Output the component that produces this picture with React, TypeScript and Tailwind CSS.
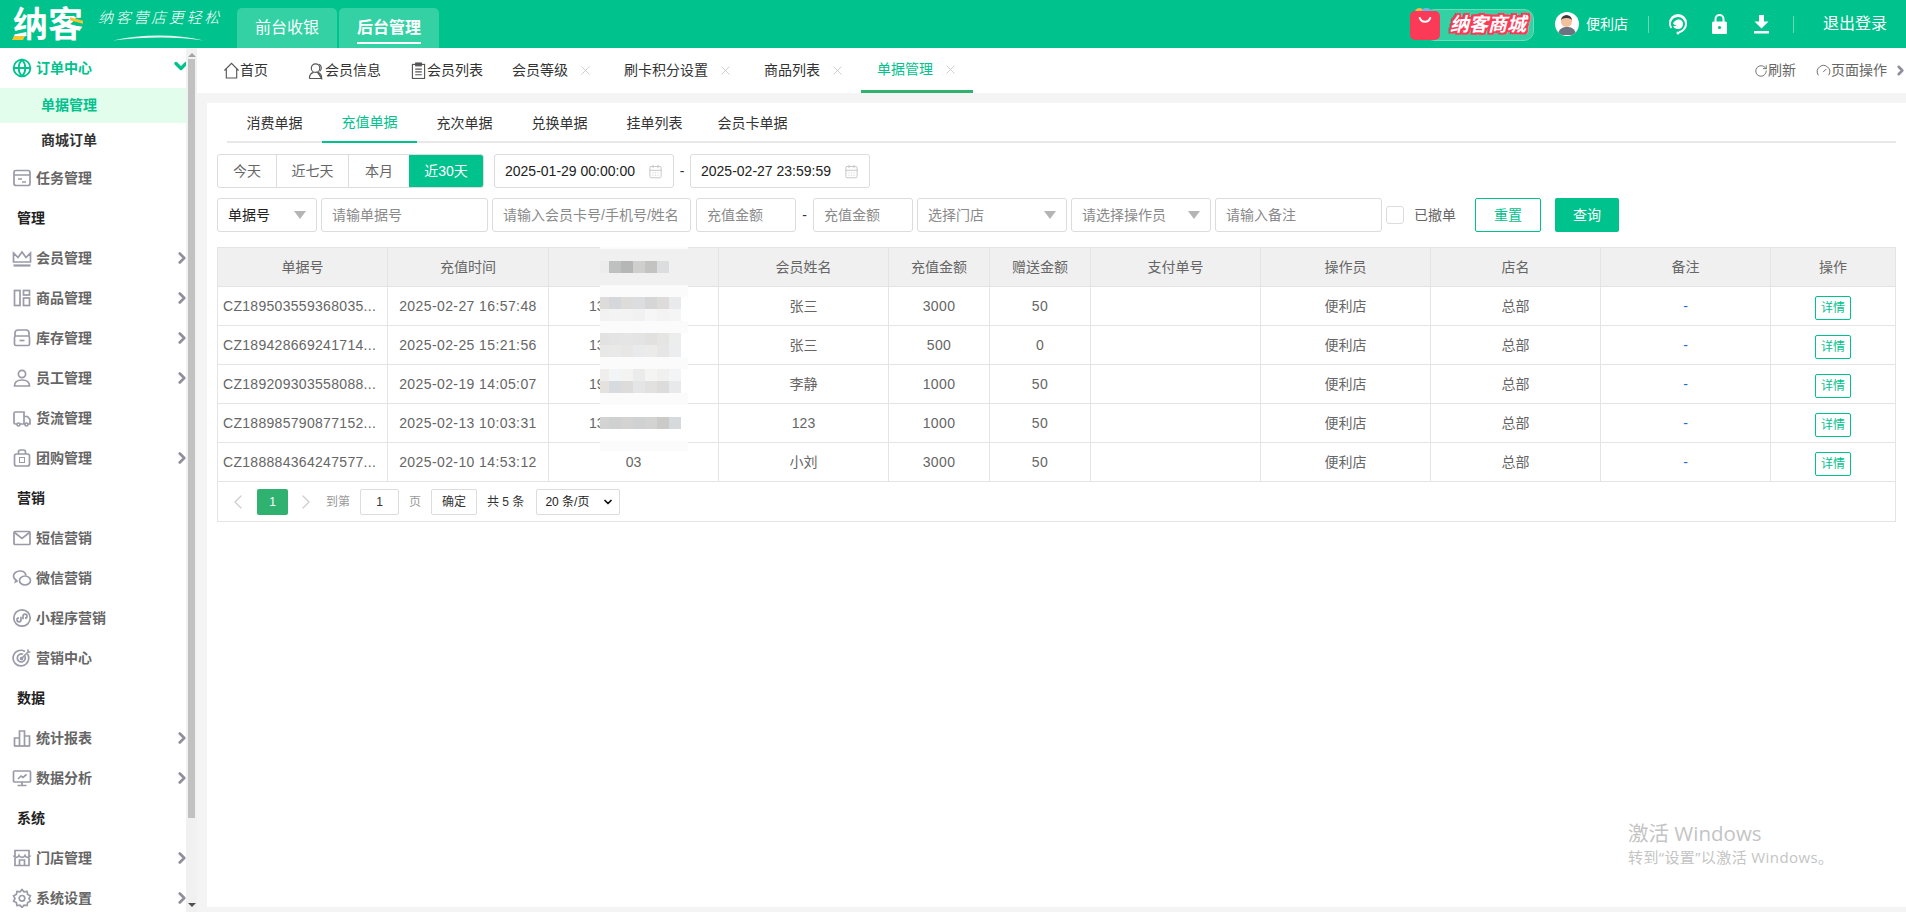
import React from 'react';
import { ChevronDown, ChevronRight, ChevronLeft, Globe, RotateCw, Gauge, X, CalendarDays } from 'lucide-react';

const font = "font-['Liberation_Sans','Noto_Sans_CJK_SC',sans-serif]";

// 侧边栏图标，手画的，线条跟原图差不多粗
const icons: Record<string, React.ReactNode> = {
  task: <><rect x="2" y="2.5" width="16" height="15" rx="2" /><path d="M2 7h16M6 11h4M10 14h4" /></>,
  crown: <><path d="M1.5 5v9h17V5l-4.5 4.5L10 4 6 9.5z" /><path d="M1.5 17.5h17" strokeWidth="2.2" /></>,
  goods: <><rect x="2.5" y="2.5" width="5.5" height="15" /><rect x="11.5" y="2.5" width="6" height="4.5" /><rect x="11.5" y="10" width="6" height="7.5" /></>,
  stock: <><path d="M3 8V5a3 3 0 0 1 3-3h8a3 3 0 0 1 3 3v3" /><rect x="2.5" y="8" width="15" height="9.5" rx="1.5" /><path d="M7.5 12.5h5" /></>,
  person: <><circle cx="10" cy="6" r="3.6" /><path d="M2.5 18c0-4 3-6 7.5-6s7.5 2 7.5 6z" /></>,
  truck: <><path d="M5 16H3.5A1.5 1.5 0 0 1 2 14.500V5.500A1.500 1.500 0 0 1 3.500 4H12v12H8" /><path d="M12 8.500h3.500l2.500 3V16h-2M12 16h1" /><circle cx="6.500" cy="16.500" r="1.500" /><circle cx="14.500" cy="16.500" r="1.500" /></>,
  bag: <><rect x="2.500" y="6" width="15" height="12" rx="2" /><path d="M6.500 6V4a2 2 0 0 1 2-2h3a2 2 0 0 1 2 2v2" /><rect x="7.500" y="9.500" width="5" height="5" strokeWidth="1" /></>,
  mail: <><rect x="2" y="3.500" width="16" height="13" rx="1" /><path d="M2.500 4.500l7.500 6 7.500-6" /></>,
  wechat: <><path d="M14 7.500C13.500 4.500 11 3 8 3 4.500 3 1.500 5.200 1.500 8c0 1.600 1 3 2.500 4l-.5 1.800 2.200-1.100" /><ellipse cx="13" cy="12.500" rx="5.500" ry="4.500" /><path d="M11 11.500h.1M15 11.500h.1M5.500 7h.1M10 7h.1" strokeWidth="1.800" /></>,
  mini: <><circle cx="10" cy="10" r="8.200" /><path d="M9 8.800v3a2 2 0 1 1-2-2M11 11.200v-3a2 2 0 1 1 2 2" /></>,
  target: <><path d="M15.500 6a7.800 7.800 0 1 1-2.500-2.500" /><path d="M12.800 8a4 4 0 1 1-1.800-1.700" /><circle cx="9.500" cy="10.500" r="1" /><path d="M9.500 10.500L16 4M16 1.500V4h2.500" /></>,
  stats: <><path d="M2.500 18v-8h5M7.500 18V3h5v15M12.500 8h5v10" /><path d="M2 18h16" /></>,
  monitor: <><rect x="1.500" y="3" width="17" height="11" rx="1" /><path d="M6 11l3-3 2 1.500 3.500-3M10 14v3.500M5.500 17.500h9" /></>,
  store: <><path d="M3 9V2.500h14V9" /><path d="M3 9V17.500h14V9M1.500 7.500c1 2.500 4.500 2.500 5.500 0 1 2.500 5 2.500 6 0 1 2.500 4.500 2.500 5.500 0M7.500 17.500v-5.500h5v5.500" /></>,
  gear: <><path d="M10 1.600l2 2.200 3-.3.700 2.900 2.700 1.400L17 10.500l1.400 2.700-2.700 1.400-.7 2.900-3-.3-2 2.200-2-2.200-3 .3-.7-2.900-2.700-1.400L3 10.500 1.600 7.800l2.700-1.400.7-2.900 3 .3z" /><circle cx="10" cy="10.300" r="2.800" /></>,
};

const NavIcon = ({ name }: { name: string }) => (
  <svg viewBox="0 0 20 20" className="w-[20px] h-[20px] mr-[4px] shrink-0 text-[#9a9aa8]" fill="none" stroke="currentColor" strokeWidth="1.700">
    {icons[name]}
  </svg>
);

const menu: { label: string; icon?: string; arrow?: boolean }[] = [
  { label: '任务管理', icon: 'task' },
  { label: '管理' },
  { label: '会员管理', icon: 'crown', arrow: true },
  { label: '商品管理', icon: 'goods', arrow: true },
  { label: '库存管理', icon: 'stock', arrow: true },
  { label: '员工管理', icon: 'person', arrow: true },
  { label: '货流管理', icon: 'truck' },
  { label: '团购管理', icon: 'bag', arrow: true },
  { label: '营销' },
  { label: '短信营销', icon: 'mail' },
  { label: '微信营销', icon: 'wechat' },
  { label: '小程序营销', icon: 'mini' },
  { label: '营销中心', icon: 'target' },
  { label: '数据' },
  { label: '统计报表', icon: 'stats', arrow: true },
  { label: '数据分析', icon: 'monitor', arrow: true },
  { label: '系统' },
  { label: '门店管理', icon: 'store', arrow: true },
  { label: '系统设置', icon: 'gear', arrow: true },
];

const tabs = [
  { label: '会员等级', w: 'w-[112px]' },
  { label: '刷卡积分设置', w: 'w-[140px]' },
  { label: '商品列表', w: 'w-[113px]' },
];

const subTabs = ['消费单据', '充值单据', '充次单据', '兑换单据', '挂单列表', '会员卡单据'];

const rows = [
  ['CZ189503559368035...', '2025-02-27 16:57:48', '13', '张三', '3000', '50'],
  ['CZ189428669241714...', '2025-02-25 15:21:56', '13', '张三', '500', '0'],
  ['CZ189209303558088...', '2025-02-19 14:05:07', '19', '李静', '1000', '50'],
  ['CZ188985790877152...', '2025-02-13 10:03:31', '13', '123', '1000', '50'],
  ['CZ188884364247577...', '2025-02-10 14:53:12', '03', '小刘', '3000', '50'],
];

const columns = ['w-[170px]', 'w-[161px]', 'w-[170px]', 'w-[170px]', 'w-[101px]', 'w-[101px]', 'w-[170px]', 'w-[170px]', 'w-[170px]', 'w-[170px]', 'flex-1'];
const headers = ['单据号', '充值时间', '', '会员姓名', '充值金额', '赠送金额', '支付单号', '操作员', '店名', '备注', '操作'];

// 手机号打码，马赛克色块: [y, 每格颜色...]
const mosaic: [number, string[]][] = [
  [14, ['#ececec', '#bfc0c0', '#b5b7b6', '#cfcfcd', '#c3c3c2', '#dcdddf']],
  [50, ['#dedcda', '#d5d7db', '#dddcda', '#dcdde0', '#d6d6d6', '#dddcda', '#e9eaec']],
  [62, ['#f2f2f2', '#f3f3f3', '#f3f3f3', '#f1f1f1', '#f6f6f6', '#f3f3f3', '#f5f5f5']],
  [86, ['#e2e2e2', '#e3e4e3', '#e5e5e5', '#e4e4e4', '#e3e1e0', '#e5e5e4', '#eceded']],
  [98, ['#e8e8e7', '#e8e9e8', '#e8e7e5', '#e9eaec', '#ebebea', '#e6e6e6', '#ecedee']],
  [122, ['#f0eeed', '#f3f4f6', '#f3f3f1', '#ebebeb', '#f4f4f2', '#f0f0ee', '#f3f4f6']],
  [134, ['#e4e1df', '#d7dade', '#dddcda', '#e4e5e7', '#e2e1df', '#dcdcdc', '#e8e9eb']],
  [170, ['#d3d3d3', '#cfd1d1', '#d4d3d1', '#cfd1d3', '#d3d3d1', '#cbcac8', '#d7dadd']],
];
const cellX = [0, 9, 21, 33, 45, 57, 69];
const cellW = [9, 12, 12, 12, 12, 12, 12];
const bands = [38, 74, 110, 146, 194];

const Caret = () => (
  <span className="w-0 h-0 border-l-[6px] border-r-[6px] border-t-[8px] border-l-transparent border-r-transparent border-t-[#b4b4b4]" />
);

const Field = ({ text, w, caret }: { text: string; w: string; caret?: boolean }) => (
  <div className={`${w} h-[34px] shrink-0 flex items-center justify-between pl-[10px] pr-[10px] border border-[#dcdcdc] rounded-[3px] text-[14px] text-[#8a8a8a]`}>
    <span className="truncate">{text}</span>
    {caret && <Caret />}
  </div>
);

const App: React.FC = () => {
  return (
    <div className={`${font} w-[1906px] h-[912px] overflow-hidden flex flex-col bg-white`}>
      {/* header */}
      <header className="h-[48px] shrink-0 bg-[#00c28c] flex items-stretch text-white">
        <div className="w-[237px] shrink-0 flex items-center pl-[13px]">
          <div className="relative w-[70px] h-[36px] flex items-center">
            <span className="text-[35px] font-bold leading-none whitespace-nowrap">纳客</span>
            <span className="absolute left-0 bottom-[2px] w-[11px] h-[4px] bg-[#f7c52d] -skew-x-[25deg]" />
            <span className="absolute right-0 top-[13px] w-[13px] h-[3px] bg-[#f7c52d] skew-y-[15deg]" />
          </div>
          <div className="ml-[15px] relative h-[40px] w-[126px] flex items-center">
            <span className="text-[15px] italic font-light tracking-[2.7px] whitespace-nowrap -mt-[11px]">纳客营店更轻松</span>
            <svg viewBox="0 0 125 12" className="absolute left-[2px] bottom-[2px] w-[118px] h-[9px]">
              <path d="M1 10C40 1 85 1 122 10C85 4 40 5 1 10Z" fill="#e6fbf3" />
            </svg>
          </div>
        </div>
        <div className="flex items-end gap-[2px]">
          <div className="w-[100px] h-[40px] rounded-t-[5px] bg-[#33d1a4] flex items-center justify-center text-[16px]">前台收银</div>
          <div className="w-[100px] h-[40px] rounded-t-[5px] bg-[#33d1a4] flex items-center justify-center text-[16px]">
            <span className="border-b-2 border-white pb-[2px] mt-[3px] font-bold">后台管理</span>
          </div>
        </div>
        <div className="ml-auto flex items-center pr-[19px]">
          {/* 商城入口 */}
          <div className="relative w-[124px] h-[32px] mt-[1px] mr-[21px] flex items-center justify-end pr-[8px]">
            <div className="absolute left-[15px] top-0 right-0 bottom-0 rounded-[10px] bg-[#33d1a4] border border-[#66ddbb]" />
            <span className="absolute left-[5px] -top-[1px] w-[9px] h-[9px] rounded-full bg-[#f0b84a]" />
            <span className="absolute left-[11px] -top-[1px] w-[11px] h-[10px] rounded-full bg-[#6cb8e6]" />
            <div className="absolute left-0 top-[2px] w-[30px] h-[29px] rounded-[5px] bg-[#fb3a57] flex items-start justify-center pt-[6px]">
              <svg viewBox="0 0 16 8" className="w-[14px] h-[7px]"><path d="M2 1C4 7 12 7 14 1" fill="none" stroke="#fff" strokeWidth="2.200" strokeLinecap="round" /></svg>
            </div>
            <span className="relative text-[19px] font-bold italic leading-[20px] [text-shadow:-2px_0_#fb3a57,2px_0_#fb3a57,0_-2px_#fb3a57,0_2px_#fb3a57,-2px_-2px_#fb3a57,2px_2px_#fb3a57,2px_-2px_#fb3a57,-2px_2px_#fb3a57]">纳客商城</span>
          </div>
          <div className="w-[24px] h-[24px] rounded-full bg-white overflow-hidden flex flex-col items-center mr-[7px]">
            <div className="w-[11px] h-[12px] mt-[3px] rounded-full bg-[#f2c09c] border-t-[3px] border-[#3a3a3a]" />
            <div className="w-[18px] h-[8px] rounded-t-full bg-[#6b7280]" />
          </div>
          <span className="text-[14px]">便利店</span>
          <div className="w-px h-[17px] bg-[#66d9b9] ml-[20px] mr-[19px]" />
          <svg viewBox="0 0 20 22" className="w-[20px] h-[22px]">
            <path d="M10 1a9 9 0 0 0-9 9.500c0 2 .7 3.700 1.800 5l1.200-1A7.200 7.200 0 0 1 2.900 10 7.100 7.100 0 0 1 17 10.500c0 3.700-2.600 7-6 7.500v2c4.600-.5 8-4.700 8-9.500A9 9 0 0 0 10 1z" fill="#fff" />
            <path d="M5 10.500C6 8 9 6 11.500 6.500c2 .5 3.500 2 3.500 4.500 0 3-2.200 5-5 5-2.500 0-4.500-1-5-3 1.500.5 3 0 4-1-1.500.5-3 0-4-1.500z" fill="#fff" />
            <circle cx="10" cy="20" r="1.500" fill="#fff" />
          </svg>
          <svg viewBox="0 0 15 20" className="w-[15px] h-[20px] ml-[24px]">
            <path d="M3.500 8V5a4 4 0 0 1 8 0v3" fill="none" stroke="#fff" strokeWidth="2" />
            <rect x="0" y="7.500" width="15" height="12.500" rx="1.500" fill="#fff" />
            <circle cx="7.500" cy="13.500" r="1.600" fill="#00c28c" />
          </svg>
          <svg viewBox="0 0 15 19" className="w-[15px] h-[19px] ml-[27px]">
            <path d="M5 0h5v6.500h4.500L7.500 13.500.5 6.500H5z" fill="#fff" />
            <rect x="0" y="16" width="15" height="2.500" fill="#fff" />
          </svg>
          <div className="w-px h-[17px] bg-[#66d9b9] ml-[24px] mr-[29px]" />
          <span className="text-[16px]">退出登录</span>
        </div>
      </header>

      <div className="flex flex-1 min-h-0">
        {/* sidebar */}
        <aside className="w-[197px] shrink-0 flex bg-white">
          <div className="w-[186px] shrink-0 overflow-hidden">
            <div className="h-[40px] flex items-center pl-[12px] text-[#00c28c] text-[14px] font-bold">
              <Globe className="w-[20px] h-[20px] mr-[4px]" strokeWidth={2.200} />
              <span className="flex-1">订单中心</span>
              <ChevronDown className="w-[20px] h-[20px] -mr-[5px] -mt-[4px]" strokeWidth={4} />
            </div>
            <div className="h-[35px] bg-[#e3fdec] flex items-center pl-[41px] text-[14px] font-bold text-[#00c28c]">单据管理</div>
            <div className="h-[35px] flex items-center pl-[41px] text-[14px] font-bold text-[#333]">商城订单</div>
            {menu.map(item => (
              <div key={item.label} className="h-[40px] flex items-center pl-[12px] text-[14px] font-bold">
                {item.icon ? (
                  <>
                    <NavIcon name={item.icon} />
                    <span className="flex-1 text-[#666]">{item.label}</span>
                    {item.arrow && <ChevronRight className="w-[18px] h-[18px] -mr-[5px] text-[#8f8f9c]" strokeWidth={3.500} />}
                  </>
                ) : (
                  <span className="pl-[5px] text-[#222]">{item.label}</span>
                )}
              </div>
            ))}
          </div>
          {/* scrollbar */}
          <div className="w-[11px] shrink-0 flex flex-col items-center bg-[#f1f1f1]">
            <span className="mt-[5px] w-0 h-0 border-l-[4px] border-r-[4px] border-b-[4px] border-l-transparent border-r-transparent border-b-[#a3a3a3]" />
            <div className="w-[7px] h-[759px] mt-[2px] bg-[#c1c1c1]" />
            <span className="mt-auto mb-[5px] w-0 h-0 border-l-[4px] border-r-[4px] border-t-[4px] border-l-transparent border-r-transparent border-t-[#505050]" />
          </div>
        </aside>

        <main className="flex-1 min-w-0 flex flex-col bg-[#f4f4f4]">
          {/* page tabs */}
          <div className="h-[45px] shrink-0 bg-white flex items-stretch text-[14px] text-[#333]">
            <div className="w-[111px] flex items-center pl-[26px]">
              <svg viewBox="0 0 18 18" className="w-[17px] h-[17px] text-[#555]" fill="none" stroke="currentColor" strokeWidth="1.200">
                <path d="M1.500 9L9 1.500 16.500 9M3.500 7.500V17h11V7.500" />
              </svg>首页
            </div>
            <div className="w-[103px] flex items-center">
              <svg viewBox="0 0 18 18" className="w-[17px] h-[18px] text-[#555]" fill="none" stroke="currentColor" strokeWidth="1.200">
                <circle cx="8" cy="6" r="4.500" /><path d="M1.500 17c0-4 2-6 4.500-6.500M10 10.500c2.500.5 4.500 2.500 4.500 6.500zM1.500 17H14M11.500 1.800c3 .8 3.500 5.500.8 7.500" />
              </svg>会员信息
            </div>
            <div className="w-[101px] flex items-center">
              <svg viewBox="0 0 16 18" className="w-[15px] h-[17px] mr-[1px] text-[#555]" fill="none" stroke="currentColor" strokeWidth="1.200">
                <rect x="1.500" y="2.500" width="13" height="15" /><rect x="5" y="1" width="6" height="3" fill="currentColor" /><path d="M4.500 7.500h7M4.500 10.500h7M4.500 13.500h7" />
              </svg>会员列表
            </div>
            {tabs.map(t => (
              <div key={t.label} className={`${t.w} flex items-center`}>
                {t.label}
                <X className="w-[15px] h-[15px] ml-[10px] text-[#c4c4c4]" strokeWidth={1.300} />
              </div>
            ))}
            <div className="w-[112px] -ml-[16px] flex items-center pl-[16px] text-[#00c28c] border-b-[3px] border-[#2fb170]">
              单据管理
              <X className="w-[15px] h-[15px] ml-[10px] text-[#c4c4c4]" strokeWidth={1.300} />
            </div>
            <div className="ml-auto flex items-center text-[#666]">
              <RotateCw className="w-[14px] h-[14px]" strokeWidth={1.500} />刷新
              <Gauge className="w-[15px] h-[15px] ml-[20px]" strokeWidth={1.500} />页面操作
              <ChevronRight className="w-[15px] h-[15px] ml-[6px] -mr-[2px] text-[#8f8f9c]" strokeWidth={4} />
            </div>
          </div>

          {/* panel */}
          <div className="mt-[10px] ml-[10px] h-[804px] bg-white relative">
            <div className="h-[40px] ml-[20px] mr-[10px] flex border-b-2 border-[#e8e8e8] text-[14px] text-[#333]">
              {subTabs.map((t, i) => (
                <div key={t} className={`px-[19.500px] h-[40px] flex items-center whitespace-nowrap ${i === 1 ? 'text-[#00c28c] border-b-2 border-[#00c28c]' : ''} ${i === 5 ? '-ml-[4px]' : ''}`}>{t}</div>
              ))}
            </div>

            {/* quick dates */}
            <div className="mt-[11px] ml-[10px] flex items-center text-[14px]">
              <div className="flex w-[267px] h-[34px] border border-[#dcdcdc] rounded-[3px] text-[#666] overflow-hidden">
                <div className="w-[59px] flex items-center justify-center border-r border-[#dcdcdc]">今天</div>
                <div className="w-[72px] flex items-center justify-center border-r border-[#dcdcdc]">近七天</div>
                <div className="w-[60px] flex items-center justify-center">本月</div>
                <div className="flex-1 flex items-center justify-center bg-[#00c28c] text-white">近30天</div>
              </div>
              <div className="ml-[10px] w-[180px] h-[34px] border border-[#dcdcdc] rounded-[3px] flex items-center justify-between pl-[10px] pr-[10px] text-[#222]">
                2025-01-29 00:00:00
                <CalendarDays className="w-[15px] h-[15px] text-[#c4c4c4]" strokeWidth={1.500} />
              </div>
              <span className="w-[16px] text-center text-[#333]">-</span>
              <div className="w-[180px] h-[34px] border border-[#dcdcdc] rounded-[3px] flex items-center justify-between pl-[10px] pr-[10px] text-[#222]">
                2025-02-27 23:59:59
                <CalendarDays className="w-[15px] h-[15px] text-[#c4c4c4]" strokeWidth={1.500} />
              </div>
            </div>

            {/* filters */}
            <div className="mt-[10px] ml-[10px] flex items-center">
              <div className="w-[100px] h-[34px] shrink-0 flex items-center justify-between px-[10px] border border-[#dcdcdc] rounded-[3px] text-[14px] text-[#222]">
                单据号<Caret />
              </div>
              <div className="ml-[4px]"><Field text="请输单据号" w="w-[167px]" /></div>
              <div className="ml-[4px]"><Field text="请输入会员卡号/手机号/姓名" w="w-[199px]" /></div>
              <div className="ml-[5px]"><Field text="充值金额" w="w-[100px]" /></div>
              <span className="w-[17px] text-center text-[14px] text-[#333]">-</span>
              <Field text="充值金额" w="w-[100px]" />
              <div className="ml-[4px]"><Field text="选择门店" w="w-[150px]" caret /></div>
              <div className="ml-[4px]"><Field text="请选择操作员" w="w-[140px]" caret /></div>
              <div className="ml-[4px]"><Field text="请输入备注" w="w-[167px]" /></div>
              <span className="ml-[4px] w-[18px] h-[18px] border border-[#dcdcdc] rounded-[3px]" />
              <span className="ml-[10px] text-[14px] text-[#666]">已撤单</span>
              <button className="ml-[19px] w-[66px] h-[34px] border border-[#00c28c] rounded-[2px] text-[14px] text-[#00c28c]">重置</button>
              <button className="ml-[14px] w-[64px] h-[34px] bg-[#00c28c] rounded-[2px] text-[14px] text-white">查询</button>
            </div>

            {/* table */}
            <div className="mt-[15px] ml-[10px] w-[1679px] border border-[#e4e4e4] text-[14px] text-[#666]">
              <div className="h-[39px] flex bg-[#f0f0f0] border-b border-[#e4e4e4]">
                {headers.map((h, i) => (
                  <div key={i} className={`${columns[i]} shrink-0 flex items-center justify-center ${i < 10 ? 'border-r border-[#e4e4e4]' : ''}`}>{h}</div>
                ))}
              </div>
              {rows.map((r, idx) => (
                <div key={r[0]} className="h-[39px] flex border-b border-[#e4e4e4]">
                  <div className={`${columns[0]} shrink-0 flex items-center pl-[5px] border-r border-[#e4e4e4] tracking-[0.300px] whitespace-nowrap`}>{r[0]}</div>
                  <div className={`${columns[1]} shrink-0 flex items-center justify-center border-r border-[#e4e4e4] tracking-[0.400px]`}>{r[1]}</div>
                  <div className={`${columns[2]} shrink-0 flex items-center justify-center border-r border-[#e4e4e4]`}>
                    {idx < 4 ? <span className="w-[89px]">{r[2]}</span> : r[2]}
                  </div>
                  <div className={`${columns[3]} shrink-0 flex items-center justify-center border-r border-[#e4e4e4]`}>{r[3]}</div>
                  <div className={`${columns[4]} shrink-0 flex items-center justify-center border-r border-[#e4e4e4] tracking-[0.400px]`}>{r[4]}</div>
                  <div className={`${columns[5]} shrink-0 flex items-center justify-center border-r border-[#e4e4e4] tracking-[0.400px]`}>{r[5]}</div>
                  <div className={`${columns[6]} shrink-0 border-r border-[#e4e4e4]`} />
                  <div className={`${columns[7]} shrink-0 flex items-center justify-center border-r border-[#e4e4e4]`}>便利店</div>
                  <div className={`${columns[8]} shrink-0 flex items-center justify-center border-r border-[#e4e4e4]`}>总部</div>
                  <div className={`${columns[9]} shrink-0 flex items-center justify-center border-r border-[#e4e4e4] text-[#1e6fd0]`}>-</div>
                  <div className="flex-1 flex items-center justify-center">
                    <span className="w-[36px] h-[24px] mt-[3px] flex items-center justify-center border border-[#00c28c] rounded-[2px] text-[12px] text-[#00c28c]">详情</span>
                  </div>
                </div>
              ))}
              {/* pager */}
              <div className="h-[39px] flex items-center text-[12px] text-[#999]">
                <ChevronLeft className="ml-[8px] w-[24px] h-[24px] text-[#ccc]" strokeWidth={1.200} />
                <span className="ml-[7px] w-[31px] h-[26px] bg-[#2fb170] rounded-[2px] text-white flex items-center justify-center">1</span>
                <ChevronRight className="ml-[6px] w-[24px] h-[24px] text-[#ccc]" strokeWidth={1.200} />
                <span className="ml-[8px]">到第</span>
                <span className="ml-[10px] w-[39px] h-[26px] border border-[#dcdcdc] rounded-[2px] flex items-center justify-center text-[#333]">1</span>
                <span className="ml-[10px]">页</span>
                <span className="ml-[10px] w-[46px] h-[26px] border border-[#dcdcdc] rounded-[2px] flex items-center justify-center text-[#333]">确定</span>
                <span className="ml-[10px] text-[#333]">共 5 条</span>
                <span className="ml-[12px] w-[84px] h-[26px] border border-[#dcdcdc] rounded-[2px] flex items-center justify-between pl-[8px] pr-[5px] text-[#222]">
                  20 条/页
                  <ChevronDown className="w-[12px] h-[12px] text-[#111]" strokeWidth={3.500} />
                </span>
              </div>
            </div>

            {/* redacted phone numbers */}
            <svg viewBox="0 0 88 204" className="absolute left-[393px] top-[144px] w-[88px] h-[204px] pointer-events-none">
              <rect x="0" y="0" width="88" height="2" fill="#fbfbfb" />
              {bands.map(y => <rect key={y} x="0" y={y} width="88" height="12" fill="#fbfbfb" />)}
              {mosaic.map(([y, cells]) =>
                cells.map((c, i) => <rect key={`${y}-${i}`} x={cellX[i]} y={y} width={cellW[i]} height="12" fill={c} />)
              )}
            </svg>

            {/* activation watermark */}
            <div className="absolute left-[1421px] top-[717px] text-[#c4c4c4] font-['Open_Sans','Noto_Sans_CJK_SC',sans-serif] pointer-events-none">
              <div className="text-[20.500px] leading-[26px]">激活 Windows</div>
              <div className="text-[15px] leading-[22px] tracking-[0.400px]">转到“设置”以激活 Windows。</div>
            </div>
          </div>
        </main>
      </div>
    </div>
  );
};

export default App;
